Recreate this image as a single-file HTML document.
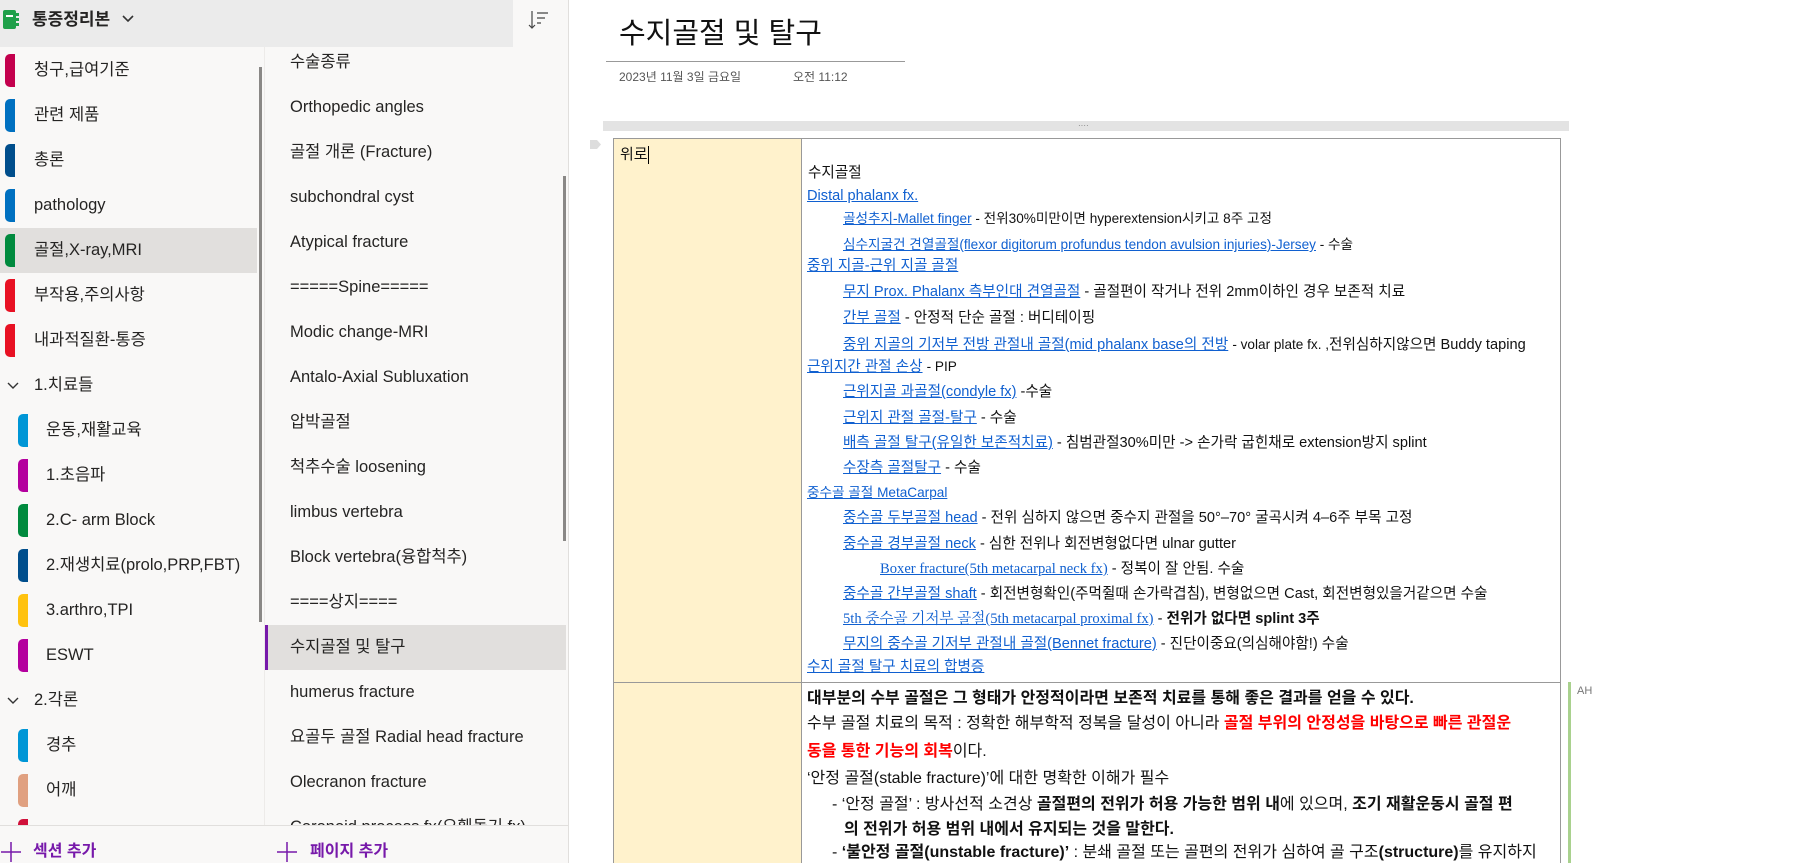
<!DOCTYPE html>
<html style="width:1812px;height:863px;overflow:hidden"><head><meta charset="utf-8"><style>
*{margin:0;padding:0;box-sizing:border-box}
body{width:1812px;height:863px;overflow:hidden;background:#fff;font-family:"Liberation Sans","Noto Sans CJK KR",sans-serif;color:#222;position:relative}
.a{position:absolute;white-space:nowrap}
.pane{position:absolute;background:#f9f8f7}
.sec{position:absolute;left:0;width:257px;height:45px;font-size:16.5px;line-height:45px;color:#252423}
.tab{position:absolute;width:10px;height:33px;top:6px;border-radius:5px 0 0 5px}
.pg{position:absolute;left:265px;width:301px;height:45px;font-size:16.5px;line-height:45px;color:#252423;padding-left:25px;overflow:hidden}
.l{position:absolute;white-space:nowrap;font-size:14.6px;line-height:20px;color:#111}
.lk{color:#1060d0;text-decoration:underline}
.m{font-size:13.6px}
.r2{position:absolute;white-space:nowrap;font-size:16px;line-height:20px;color:#111}
b{font-weight:bold}
.red{color:#f00;font-weight:bold}
</style></head><body>
<div class="pane" style="left:0;top:0;width:568px;height:863px"></div>
<div class="a" style="left:0;top:0;width:513px;height:47px;background:#ebebeb"></div>
<div class="a" style="left:568px;top:0;width:1px;height:863px;background:#e1dfdd"></div>
<div class="a" style="left:264px;top:47px;width:1px;height:816px;background:#edebe9"></div>
<svg class="a" style="left:3px;top:10px" width="16" height="19"><rect x="0" y="0" width="13" height="19" rx="2" fill="#1fa04a"/><rect x="3" y="5" width="7" height="2" fill="#fff"/><rect x="13" y="3" width="3" height="3" fill="#1fa04a"/><rect x="13" y="8" width="3" height="3" fill="#1fa04a"/><rect x="13" y="13" width="3" height="3" fill="#1fa04a"/></svg>
<div class="a" style="left:32px;top:9px;font-size:17px;font-weight:bold;color:#252423;line-height:22px">통증정리본</div>
<svg class="a" style="left:122px;top:14px" width="12" height="10"><path d="M1 2 L6 7 L11 2" stroke="#333" stroke-width="1.6" fill="none"/></svg>
<svg class="a" style="left:528px;top:9px" width="22" height="22"><path d="M4 2 V19 M1 16 L4 19 L7 16" stroke="#444" stroke-width="1.2" fill="none"/><path d="M9 4 H20 M9 9 H17 M9 14 H13" stroke="#444" stroke-width="1.3"/></svg>

<div class="sec" style="top:48px"><div class="tab" style="left:5px;background:#c3004d"></div><span style="margin-left:34px">청구,급여기준</span></div>
<div class="sec" style="top:93px"><div class="tab" style="left:5px;background:#0070c0"></div><span style="margin-left:34px">관련 제품</span></div>
<div class="sec" style="top:138px"><div class="tab" style="left:5px;background:#004e8c"></div><span style="margin-left:34px">총론</span></div>
<div class="sec" style="top:183px"><div class="tab" style="left:5px;background:#0070c0"></div><span style="margin-left:34px">pathology</span></div>
<div class="sec" style="top:228px;background:#e1dfdd"><div class="tab" style="left:5px;background:#008a3e"></div><span style="margin-left:34px">골절,X-ray,MRI</span></div>
<div class="sec" style="top:273px"><div class="tab" style="left:5px;background:#e81123"></div><span style="margin-left:34px">부작용,주의사항</span></div>
<div class="sec" style="top:318px"><div class="tab" style="left:5px;background:#e81123"></div><span style="margin-left:34px">내과적질환-통증</span></div>
<div class="sec" style="top:363px"><svg class="a" style="left:7px;top:18px" width="12" height="9"><path d="M1 2 L6 7 L11 2" stroke="#333" stroke-width="1.4" fill="none"/></svg><span style="margin-left:34px">1.치료들</span></div>
<div class="sec" style="top:408px"><div class="tab" style="left:18px;background:#0096d6"></div><span style="margin-left:46px">운동,재활교육</span></div>
<div class="sec" style="top:453px"><div class="tab" style="left:18px;background:#b4009e"></div><span style="margin-left:46px">1.초음파</span></div>
<div class="sec" style="top:498px"><div class="tab" style="left:18px;background:#008a3e"></div><span style="margin-left:46px">2.C- arm Block</span></div>
<div class="sec" style="top:543px"><div class="tab" style="left:18px;background:#004e8c"></div><span style="margin-left:46px">2.재생치료(prolo,PRP,FBT)</span></div>
<div class="sec" style="top:588px"><div class="tab" style="left:18px;background:#ffc20e"></div><span style="margin-left:46px">3.arthro,TPI</span></div>
<div class="sec" style="top:633px"><div class="tab" style="left:18px;background:#b4009e"></div><span style="margin-left:46px">ESWT</span></div>
<div class="sec" style="top:678px"><svg class="a" style="left:7px;top:18px" width="12" height="9"><path d="M1 2 L6 7 L11 2" stroke="#333" stroke-width="1.4" fill="none"/></svg><span style="margin-left:34px">2.각론</span></div>
<div class="sec" style="top:723px"><div class="tab" style="left:18px;background:#0096d6"></div><span style="margin-left:46px">경추</span></div>
<div class="sec" style="top:768px"><div class="tab" style="left:18px;background:#e0a080"></div><span style="margin-left:46px">어깨</span></div>
<div class="sec" style="top:813px;height:12px;overflow:hidden"><div class="tab" style="left:18px;background:#d0103a"></div></div>
<div class="a" style="left:259px;top:67px;width:3px;height:555px;background:#8a8886"></div>

<div class="pg" style="top:40px">수술종류</div>
<div class="pg" style="top:85px">Orthopedic angles</div>
<div class="pg" style="top:130px">골절 개론 (Fracture)</div>
<div class="pg" style="top:175px">subchondral cyst</div>
<div class="pg" style="top:220px">Atypical fracture</div>
<div class="pg" style="top:265px">=====Spine=====</div>
<div class="pg" style="top:310px">Modic change-MRI</div>
<div class="pg" style="top:355px">Antalo-Axial Subluxation</div>
<div class="pg" style="top:400px">압박골절</div>
<div class="pg" style="top:445px">척추수술 loosening</div>
<div class="pg" style="top:490px">limbus vertebra</div>
<div class="pg" style="top:535px">Block vertebra(융합척추)</div>
<div class="pg" style="top:580px">====상지====</div>
<div class="pg" style="top:625px;background:#e1dfdd;border-left:3px solid #7719aa;padding-left:22px">수지골절 및 탈구</div>
<div class="pg" style="top:670px">humerus fracture</div>
<div class="pg" style="top:715px">요골두 골절 Radial head fracture</div>
<div class="pg" style="top:760px">Olecranon fracture</div>
<div class="pg" style="top:805px;height:20px">Coronoid process fx(오훼돌기 fx)</div>
<div class="a" style="left:563px;top:176px;width:3px;height:365px;background:#8a8886"></div>

<div class="a" style="left:0;top:825px;width:568px;height:38px;background:#f9f8f7;border-top:1px solid #e1dfdd"></div>
<svg class="a" style="left:0;top:840px" width="22" height="22"><path d="M11 2 V22 M1 12 H21" stroke="#7719aa" stroke-width="1.5"/></svg>
<div class="a" style="left:33px;top:841px;font-size:16px;font-weight:bold;color:#7719aa;line-height:22px">섹션 추가</div>
<svg class="a" style="left:276px;top:840px" width="22" height="22"><path d="M11 2 V22 M1 12 H21" stroke="#7719aa" stroke-width="1.5"/></svg>
<div class="a" style="left:310px;top:841px;font-size:16px;font-weight:bold;color:#7719aa;line-height:22px">페이지 추가</div>

<div class="a" style="left:619px;top:15px;font-size:29px;line-height:38px;color:#111">수지골절 및 탈구</div>
<div class="a" style="left:606px;top:61px;width:299px;height:1px;background:#999"></div>
<div class="a" style="left:619px;top:69px;font-size:12px;color:#555;line-height:16px">2023년 11월 3일 금요일</div>
<div class="a" style="left:793px;top:69px;font-size:12px;color:#555;line-height:16px">오전 11:12</div>

<div class="a" style="left:603px;top:121px;width:966px;height:10px;background:#e3e3e3"></div>
<div class="a" style="left:1078px;top:122px;font-size:8px;color:#777;line-height:8px">····</div>
<svg class="a" style="left:590px;top:140px" width="12" height="9"><path d="M0 0 H7 L11 4.5 L7 9 H0Z" fill="#ddd"/></svg>
<div class="a" style="left:613px;top:138px;width:948px;height:725px;border:1px solid #999;border-bottom:none"></div>
<div class="a" style="left:614px;top:139px;width:187px;height:543px;background:#fff2cc"></div>
<div class="a" style="left:614px;top:683px;width:187px;height:180px;background:#fff2cc"></div>
<div class="a" style="left:801px;top:139px;width:1px;height:724px;background:#999"></div>
<div class="a" style="left:614px;top:682px;width:947px;height:1px;background:#999"></div>
<div class="a" style="left:1568px;top:682px;width:3px;height:181px;background:#a9d18e"></div>
<div class="a" style="left:1577px;top:685px;font-size:11px;color:#777">AH</div>

<div class="l" style="left:620px;top:145px;font-size:15px">위로<span style="display:inline-block;width:1px;height:18px;background:#000;vertical-align:middle"></span></div>
<div class="l" style="left:808px;top:163px">수지골절</div>
<div class="l" style="left:807px;top:186px"><span class="lk">Distal phalanx fx.</span></div>
<div class="l m" style="left:843px;top:209px"><span class="lk">골성추지-Mallet finger</span> - 전위30%미만이면 hyperextension시키고 8주 고정</div>
<div class="l m" style="left:843px;top:235px"><span class="lk">심수지굴건 견열골절(flexor digitorum profundus tendon avulsion injuries)-Jersey</span> - 수술</div>
<div class="l" style="left:807px;top:256px"><span class="lk">중위 지골-근위 지골 골절</span></div>
<div class="l" style="left:843px;top:282px"><span class="lk">무지 Prox. Phalanx 측부인대 견열골절</span> - 골절편이 작거나 전위 2mm이하인 경우 보존적 치료</div>
<div class="l" style="left:843px;top:308px"><span class="lk">간부 골절</span> - 안정적 단순 골절 : 버디테이핑</div>
<div class="l" style="left:843px;top:335px"><span class="lk">중위 지골의 기저부 전방 관절내 골절(mid phalanx base의 전방</span> <span class="m">- volar plate fx. ,</span>전위심하지않으면 Buddy taping</div>
<div class="l" style="left:807px;top:357px"><span class="lk">근위지간 관절 손상</span> <span class="m">- PIP</span></div>
<div class="l" style="left:843px;top:382px"><span class="lk">근위지골 과골절(condyle fx)</span> -수술</div>
<div class="l" style="left:843px;top:408px"><span class="lk">근위지 관절 골절-탈구</span> - 수술</div>
<div class="l" style="left:843px;top:433px"><span class="lk">배측 골절 탈구(유일한 보존적치료)</span> - 침범관절30%미만 -&gt; 손가락 굽힌채로 extension방지 splint</div>
<div class="l" style="left:843px;top:458px"><span class="lk">수장측 골절탈구</span> - 수술</div>
<div class="l m" style="left:807px;top:483px"><span class="lk">중수골 골절 MetaCarpal</span></div>
<div class="l" style="left:843px;top:508px"><span class="lk">중수골 두부골절 head</span> - 전위 심하지 않으면 중수지 관절을 50°–70° 굴곡시켜 4–6주 부목 고정</div>
<div class="l" style="left:843px;top:534px"><span class="lk">중수골 경부골절 neck</span> - 심한 전위나 회전변형없다면 ulnar gutter</div>
<div class="l" style="left:880px;top:559px"><span class="lk" style="font-family:'Liberation Serif','Noto Serif CJK SC',serif">Boxer fracture(5th metacarpal neck fx)</span> - 정복이 잘 안됨. 수술</div>
<div class="l" style="left:843px;top:584px"><span class="lk">중수골 간부골절 shaft</span> - 회전변형확인(주먹쥘때 손가락겹침), 변형없으면 Cast, 회전변형있을거같으면 수술</div>
<div class="l" style="left:843px;top:609px"><span class="lk" style="font-family:'Liberation Serif','Noto Serif CJK SC',serif">5th 중수골 기저부 골절(5th metacarpal proximal fx)</span> - <b>전위가 없다면 splint 3주</b></div>
<div class="l" style="left:843px;top:634px"><span class="lk">무지의 중수골 기저부 관절내 골절(Bennet fracture)</span> -  진단이중요(의심해야함!) 수술</div>
<div class="l" style="left:807px;top:657px"><span class="lk">수지 골절 탈구 치료의 합병증</span></div>

<div class="r2" style="left:807px;top:689px"><b>대부분의 수부 골절은 그 형태가 안정적이라면 보존적 치료를 통해 좋은 결과를 얻을 수 있다.</b></div>
<div class="r2" style="left:807px;top:714px">수부 골절 치료의 목적 : 정확한 해부학적 정복을 달성이 아니라 <span class="red">골절 부위의 안정성을 바탕으로 빠른 관절운</span></div>
<div class="r2" style="left:807px;top:742px"><span class="red">동을 통한 기능의 회복</span>이다.</div>
<div class="r2" style="left:807px;top:769px">‘안정 골절(stable fracture)’에 대한 명확한 이해가 필수</div>
<div class="r2" style="left:832px;top:795px">- ‘안정 골절’ : 방사선적 소견상 <b>골절편의 전위가 허용 가능한 범위 내</b>에 있으며, <b>조기 재활운동시 골절 편</b></div>
<div class="r2" style="left:844px;top:820px"><b>의 전위가 허용 범위 내에서 유지되는 것을 말한다.</b></div>
<div class="r2" style="left:832px;top:843px">- <b>‘불안정 골절(unstable fracture)’</b> : 분쇄 골절 또는 골편의 전위가 심하여 골 구조<b>(structure)</b>를 유지하지</div>
</body></html>
